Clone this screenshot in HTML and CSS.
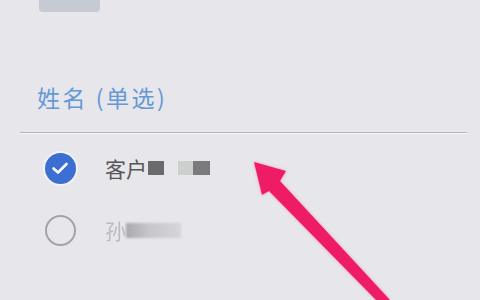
FILE: index.html
```html
<!DOCTYPE html>
<html lang="zh-CN">
<head>
    <meta charset="UTF-8">
    <meta name="viewport" content="width=device-width, initial-scale=1.0">
    <title>单选</title>
    <link rel="stylesheet" href="styles.css">
</head>
<body>

<div class="screen">
    <!-- bouton du dessus, coupé par la capture -->
    <div class="top-tab"></div>

    <div class="field-title">姓名 (单选)</div>
    <div class="divider"></div>

    <ul class="options">
        <li class="option">
            <span class="radio checked">
                <svg width="30" height="30" viewBox="0 0 30 30">
                    <path d="M8.5 15.5 L13 19.5 L21.5 11" fill="none" stroke="#fff" stroke-width="2.6" stroke-linecap="round" stroke-linejoin="round"/>
                </svg>
            </span>
            <span class="label">客户<span class="mask dark"></span><span class="mask light"></span><span class="mask mid"></span></span>
        </li>
        <li class="option">
            <span class="radio"></span>
            <span class="label faded">孙<span class="mask blur"></span></span>
        </li>
    </ul>

    <!-- flèche d'annotation -->
    <svg class="arrow" width="480" height="300" viewBox="0 0 480 300">
        <polygon points="254,162 286,171 280,181 390,300 376,300 269,191 262,195" fill="#ee1c64"/>
    </svg>
</div>

</body>
</html>
```

FILE: styles.css
```css
* {
    margin: 0;
    padding: 0;
    box-sizing: border-box;
}
body {
    font-family: 'Noto Sans CJK SC', 'Noto Sans', sans-serif;
    background: #e6e6eb;
    width: 480px;
    height: 300px;
    overflow: hidden;
}
.screen {
    position: relative;
    width: 480px;
    height: 300px;
}
.top-tab {
    margin-left: 39px;
    width: 61px;
    height: 12px;
    background: #c6cad2;
    border-radius: 0 0 4px 4px;
}
.field-title {
    margin-top: 70px;
    padding-left: 37px;
    font-size: 23px;
    line-height: 30px;
    color: #6598d6;
    letter-spacing: 2.5px;
}
.divider {
    margin: 20px 13px 0 20px;
    height: 1px;
    background: #b6b6ba;
    box-shadow: 0 1px 1px rgba(255, 255, 255, 0.7);
}
.options {
    list-style: none;
    padding-top: 4px;
}
.option {
    display: flex;
    align-items: center;
    height: 62px;
    padding-left: 45px;
}
.radio {
    width: 31px;
    height: 31px;
    border-radius: 50%;
    border: 2px solid #a4a4a8;
    flex-shrink: 0;
}
.radio.checked {
    border: none;
    background: #3b6fd2;
    box-shadow: 0 0 0 2px rgba(255, 255, 255, 0.5);
}
.radio svg {
    display: block;
}
.label {
    display: flex;
    align-items: center;
    margin-left: 29px;
    font-size: 21px;
    color: #575757;
}
.label.faded {
    color: #bcbcbf;
    filter: blur(0.4px);
}
.mask {
    display: inline-block;
    height: 14px;
    filter: blur(0.5px);
}
.mask.dark {
    width: 16px;
    margin-left: 1px;
    background: #6a6a6c;
}
.mask.light {
    width: 15px;
    margin-left: 14px;
    background: #cdcfcf;
}
.mask.mid {
    width: 17px;
    background: #7a7a7c;
}
.mask.blur {
    width: 55px;
    height: 15px;
    background: linear-gradient(90deg, #a9a9ad, #c6c6ca 40%, #d6d6da);
    filter: blur(1px);
}
.arrow {
    position: absolute;
    top: 0;
    left: 0;
    filter: drop-shadow(0 0 1.5px rgba(255, 120, 170, 0.8));
}
```
